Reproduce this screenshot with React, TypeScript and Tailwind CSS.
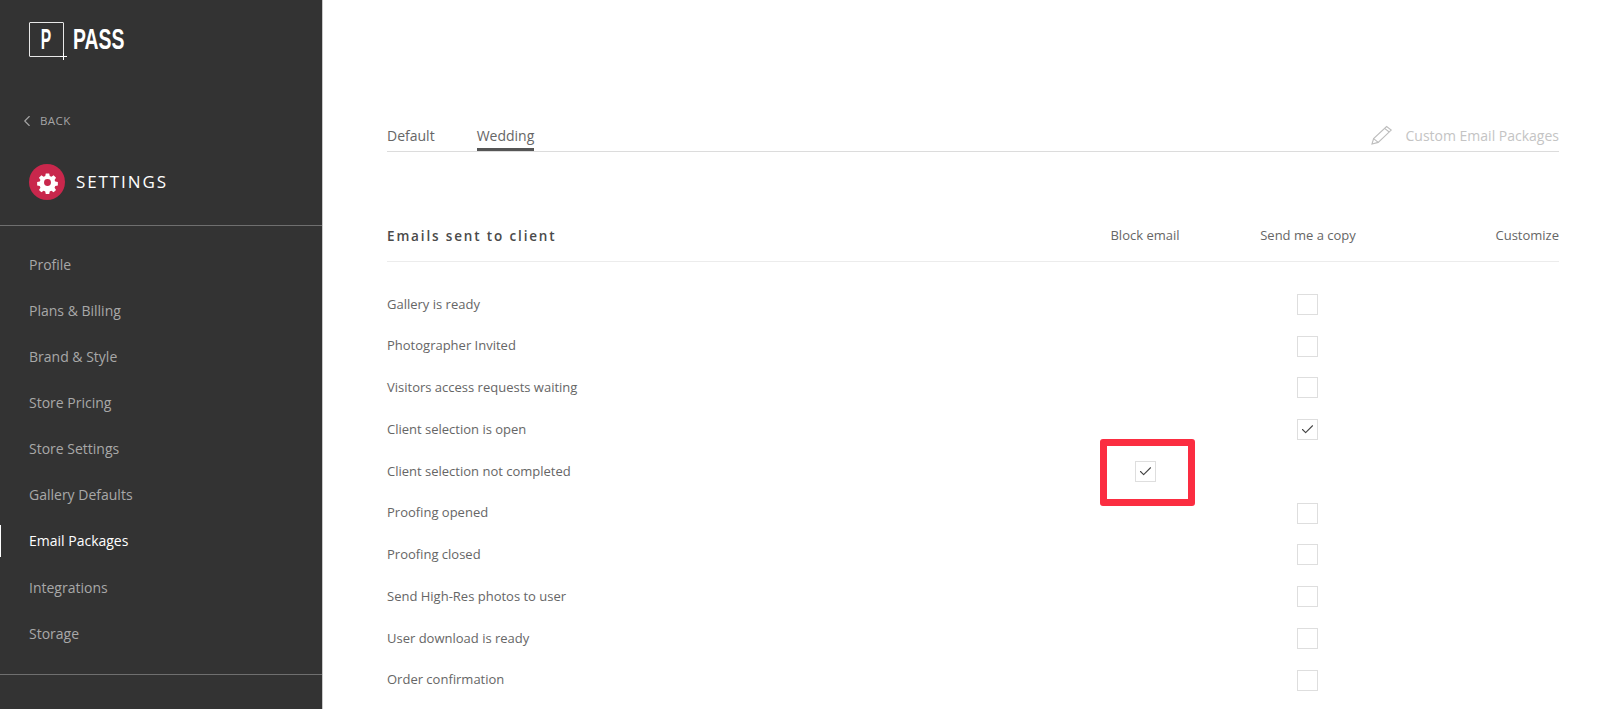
import { Check, ChevronLeft } from "lucide-react";

const NAV_ITEMS = [
  "Profile",
  "Plans & Billing",
  "Brand & Style",
  "Store Pricing",
  "Store Settings",
  "Gallery Defaults",
  "Email Packages",
  "Integrations",
  "Storage",
];

// undefined = no checkbox in that column
const ROWS: { label: string; block?: boolean; copy?: boolean }[] = [
  { label: "Gallery is ready", copy: false },
  { label: "Photographer Invited", copy: false },
  { label: "Visitors access requests waiting", copy: false },
  { label: "Client selection is open", copy: true },
  { label: "Client selection not completed", block: true },
  { label: "Proofing opened", copy: false },
  { label: "Proofing closed", copy: false },
  { label: "Send High-Res photos to user", copy: false },
  { label: "User download is ready", copy: false },
  { label: "Order confirmation", copy: false },
];

function Logo() {
  return (
    <div className="flex h-[36px] items-center">
      <div className="relative flex h-[35px] w-[35px] items-center justify-center rounded-[1px] border border-[#e8e8e8]">
        <span className="origin-center scale-x-[0.52] font-['Liberation_Sans',sans-serif] text-[30px] leading-none font-bold text-white">
          P
        </span>
        <svg viewBox="0 0 7 7" className="absolute right-[-4px] bottom-[-4px] h-[7px] w-[7px]" stroke="#fff" strokeWidth="1">
          <path d="M3.5 0v7M0 3.5h7" />
        </svg>
      </div>
      <span className="ml-[9px] w-[52px] origin-left scale-x-[0.646] font-['Liberation_Sans',sans-serif] text-[30px] leading-none font-bold whitespace-nowrap text-white">
        PASS
      </span>
    </div>
  );
}

function GearBadge() {
  return (
    <div className="flex h-[36px] w-[36px] items-center justify-center rounded-full bg-[#c9274c]">
      <svg viewBox="0 0 24 24" className="h-[23px] w-[23px]">
        <path
          fill="#fff"
          fillRule="evenodd"
          d="M10 1.5h4l.6 3 1.9.8 2.6-1.7 2.8 2.8-1.7 2.6.8 1.9 3 .6v4l-3 .6-.8 1.9 1.7 2.6-2.8 2.8-2.6-1.7-1.9.8-.6 3h-4l-.6-3-1.9-.8-2.6 1.7-2.8-2.8 1.7-2.6-.8-1.9-3-.6v-4l3-.6.8-1.9-1.7-2.6 2.8-2.8 2.6 1.7 1.9-.8zM12 8a4 4 0 1 0 0 8 4 4 0 0 0 0-8z"
          transform="translate(1.2 1.2) scale(0.9)"
        />
      </svg>
    </div>
  );
}

function Checkbox({ checked }: { checked?: boolean }) {
  return (
    <div className="flex h-[21px] w-[21px] items-center justify-center border border-[#dedede] bg-white">
      {checked && <Check className="h-[15px] w-[15px] text-[#444]" strokeWidth={1.7} />}
    </div>
  );
}

function Sidebar() {
  return (
    <aside className="flex h-full w-[323px] shrink-0 flex-col border-r border-[#c9c9c9] bg-[#333333]">
      <div className="pt-[21px] pl-[29px]">
        <Logo />
      </div>
      <div className="mt-[55px] flex h-[18px] items-center pl-[18px] text-[#a5a5a5]">
        <ChevronLeft className="h-[18px] w-[18px]" strokeWidth={1.5} />
        <span className="ml-[4px] text-[11.5px] leading-[14px] tracking-[0.4px]">BACK</span>
      </div>
      <div className="mt-[34px] flex items-center pl-[29px]">
        <GearBadge />
        <span className="ml-[11px] text-[17px] leading-[36px] tracking-[1.9px] text-white">SETTINGS</span>
      </div>
      <div className="mt-[25px] border-t border-[#6f6f6f]" />
      <nav className="flex flex-col pt-[15px]">
        {NAV_ITEMS.map((item) => {
          const active = item === "Email Packages";
          return (
            <div
              key={item}
              className={
                active
                  ? "relative flex h-[46.15px] items-center pl-[29px] text-[14px] text-white"
                  : "flex h-[46.15px] items-center pl-[29px] text-[14px] text-[#a8a8a8]"
              }
            >
              {active && <div className="absolute top-[7px] left-0 h-[32px] w-[1px] bg-white" />}
              {item}
            </div>
          );
        })}
      </nav>
      <div className="mt-[18px] border-t border-[#6f6f6f]" />
    </aside>
  );
}

function Tabs() {
  return (
    <div className="flex h-[46px] items-stretch justify-between border-b border-[#dcdcdc]">
      <div className="flex gap-[41px] text-[14px] text-[#666]">
        <div className="flex h-[45px] items-center pt-[14px]">Default</div>
        <div className="ml-[1px] flex h-[45px] items-center border-b-[3px] border-[#555] pt-[17px]">Wedding</div>
      </div>
      <div className="flex h-[45px] items-center pt-[13px] text-[14px] text-[#c4c4c4]">
        <svg viewBox="0 0 22 20" className="mr-[13px] h-[20px] w-[22px]" fill="none" stroke="#bdbdbd" strokeWidth="1.1">
          <path d="M1 19l1.6-5.4L15.6 1.5l4.6 3.6L7.2 17.4z" />
          <path d="M2.6 13.6l4.6 3.8M13.6 3.4l4.6 3.6" />
        </svg>
        Custom Email Packages
      </div>
    </div>
  );
}

export default function App() {
  return (
    <div className="flex h-[709px] w-full overflow-hidden bg-white font-['Open_Sans',sans-serif]">
      <Sidebar />
      <main className="min-w-0 flex-1 pt-[106px] pr-[41px] pl-[64px]">
        <Tabs />
        <div className="mt-[62px] flex h-[48px] items-center border-b border-[#ececec] pb-[4px] text-[13px] text-[#666]">
          <div className="flex-1 pt-[1px] text-[13.5px] font-semibold tracking-[1.85px] text-[#4a4a4a]">Emails sent to client</div>
          <div className="w-[100px] text-center">Block email</div>
          <div className="ml-[63px] w-[100px] text-center whitespace-nowrap">Send me a copy</div>
          <div className="w-[201px] text-right">Customize</div>
        </div>
        <div className="pt-[21.5px]">
          {ROWS.map((row) => (
            <div key={row.label} className="flex h-[41.75px] items-center text-[13px] text-[#666]">
              <div className="flex-1">{row.label}</div>
              <div className="flex w-[100px] justify-center">
                {row.block !== undefined && (
                  <div className="relative">
                    <Checkbox checked={row.block} />
                    <div className="absolute top-[-22px] left-[-35px] h-[67px] w-[95px] rounded-[3px] border-[7px] border-[#fb2d41]" />
                  </div>
                )}
              </div>
              <div className="ml-[62px] flex w-[100px] justify-center">
                {row.copy !== undefined && <Checkbox checked={row.copy} />}
              </div>
              <div className="w-[202px]" />
            </div>
          ))}
        </div>
      </main>
    </div>
  );
}
